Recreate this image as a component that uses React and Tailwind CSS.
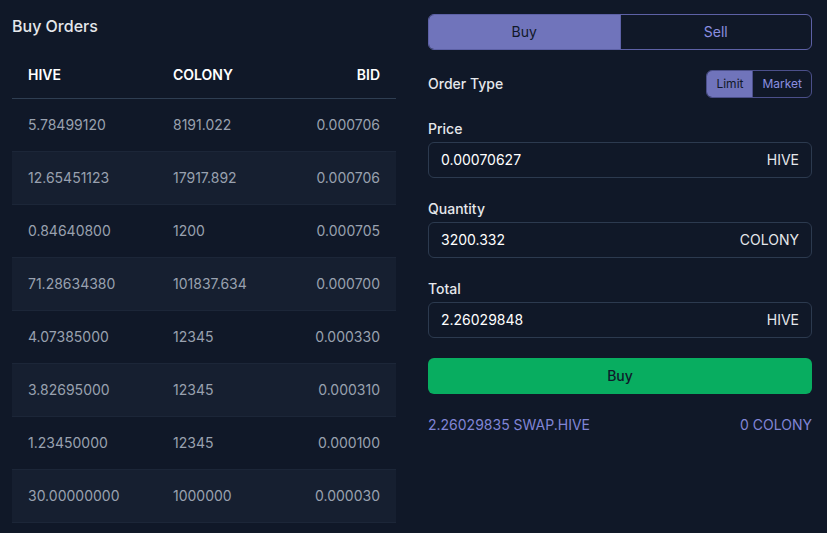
import React, { useState } from 'react';

const orders = [
  ['5.78499120', '8191.022', '0.000706'],
  ['12.65451123', '17917.892', '0.000706'],
  ['0.84640800', '1200', '0.000705'],
  ['71.28634380', '101837.634', '0.000700'],
  ['4.07385000', '12345', '0.000330'],
  ['3.82695000', '12345', '0.000310'],
  ['1.23450000', '12345', '0.000100'],
  ['30.00000000', '1000000', '0.000030'],
];

const Field = ({ label, value, unit }) => (
  <div>
    <p className="text-sm font-medium text-gray-200 mb-[3px] leading-5">{label}</p>
    <div className="flex items-center justify-between h-9 px-3 border border-[#2c3a4f] rounded-md">
      <span className="text-sm text-white">{value}</span>
      <span className="text-sm text-gray-200">{unit}</span>
    </div>
  </div>
);

const App = () => {
  const [side, setSide] = useState('buy');
  const [orderType, setOrderType] = useState('limit');

  return (
    <div className="min-h-screen bg-[#101828] font-[Inter,sans-serif] flex gap-8 pl-3 pt-4">
      {/* Buy Orders */}
      <div className="w-[384px]">
        <h2 className="text-base font-medium text-gray-200 leading-5">Buy Orders</h2>
        <table className="w-full mt-4 text-sm">
          <thead>
            <tr className="h-[46px] border-b border-[#2f3e52]">
              <th className="text-left font-semibold text-white pl-4 w-[161px]">HIVE</th>
              <th className="text-left font-semibold text-white">COLONY</th>
              <th className="text-right font-semibold text-white pr-4">BID</th>
            </tr>
          </thead>
          <tbody>
            {orders.map((o, i) => (
              <tr key={i} className={`h-[53px] border-b border-[#1c2638] ${i % 2 === 1 ? 'bg-[#161f30]' : ''}`}>
                <td className="pl-4 text-gray-400">{o[0]}</td>
                <td className="text-gray-400">{o[1]}</td>
                <td className="pr-4 text-right text-gray-400">{o[2]}</td>
              </tr>
            ))}
          </tbody>
        </table>
      </div>

      {/* Order Form */}
      <div className="w-[384px] -mt-[2px]">
        <div className="flex h-9 border border-[#5d61a6] rounded-md overflow-hidden">
          <button
            onClick={() => setSide('buy')}
            className={`flex-1 text-sm ${side === 'buy' ? 'bg-[#7074bb] text-[#101828]' : 'text-[#8b8fe0]'}`}
          >
            Buy
          </button>
          <button
            onClick={() => setSide('sell')}
            className={`flex-1 text-sm border-l border-[#5d61a6] ${side === 'sell' ? 'bg-[#7074bb] text-[#101828]' : 'text-[#8b8fe0]'}`}
          >
            Sell
          </button>
        </div>

        <div className="flex items-center justify-between mt-5 h-7">
          <span className="text-sm font-medium text-gray-200">Order Type</span>
          <div className="flex h-7 border border-[#4b4f8a] rounded-md overflow-hidden text-xs">
            <button
              onClick={() => setOrderType('limit')}
              className={`px-[9px] ${orderType === 'limit' ? 'bg-[#7074bb] text-[#101828]' : 'text-[#8b8fe0]'}`}
            >
              Limit
            </button>
            <button
              onClick={() => setOrderType('market')}
              className={`px-[9px] border-l border-[#4b4f8a] ${orderType === 'market' ? 'bg-[#7074bb] text-[#101828]' : 'text-[#8b8fe0]'}`}
            >
              Market
            </button>
          </div>
        </div>

        <div className="space-y-[21px] mt-[21px]">
          <Field label="Price" value="0.00070627" unit="HIVE" />
          <Field label="Quantity" value="3200.332" unit="COLONY" />
          <Field label="Total" value="2.26029848" unit="HIVE" />
        </div>

        <button className="w-full h-9 mt-5 bg-[#08ad60] rounded-md text-sm font-medium text-[#0f1a2a]">
          Buy
        </button>

        <div className="flex justify-between mt-[21px] leading-5 text-sm text-[#8085d6]">
          <span>2.26029835 SWAP.HIVE</span>
          <span>0 COLONY</span>
        </div>
      </div>
    </div>
  );
};

export default App;
